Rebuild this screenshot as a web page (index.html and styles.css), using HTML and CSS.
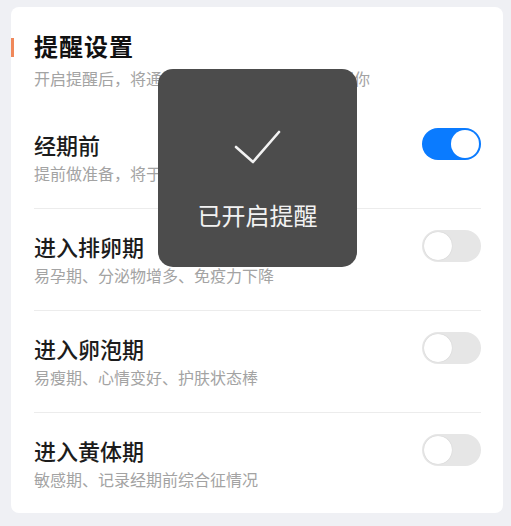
FILE: index.html
```html
<!DOCTYPE html>
<html lang="zh-CN">
<head>
    <meta charset="UTF-8">
    <meta name="viewport" content="width=device-width, initial-scale=1.0">
    <title>提醒设置</title>
    <link rel="stylesheet" href="styles.css">
</head>
<body>
    <div class="card">
        <div class="header">
            <h2 class="header-title">提醒设置</h2>
            <p class="header-desc">开启提醒后，将通过消息在各阶段开始前提醒你</p>
        </div>

        <div class="row">
            <div class="row-text">
                <div class="row-title">经期前</div>
                <div class="row-desc">提前做准备，将于经期前3天提醒你</div>
            </div>
            <div class="switch on"><span class="knob"></span></div>
        </div>

        <div class="row">
            <div class="row-text">
                <div class="row-title">进入排卵期</div>
                <div class="row-desc">易孕期、分泌物增多、免疫力下降</div>
            </div>
            <div class="switch"><span class="knob"></span></div>
        </div>

        <div class="row">
            <div class="row-text">
                <div class="row-title">进入卵泡期</div>
                <div class="row-desc">易瘦期、心情变好、护肤状态棒</div>
            </div>
            <div class="switch"><span class="knob"></span></div>
        </div>

        <div class="row">
            <div class="row-text">
                <div class="row-title">进入黄体期</div>
                <div class="row-desc">敏感期、记录经期前综合征情况</div>
            </div>
            <div class="switch"><span class="knob"></span></div>
        </div>
    </div>

    <div class="toast">
        <svg class="toast-icon" width="48" height="36" viewBox="0 0 48 36">
            <polyline points="3,18 20,33 46,3" fill="none" stroke="#f2f2f2" stroke-width="2.6" stroke-linecap="round" stroke-linejoin="round"/>
        </svg>
        <div class="toast-text">已开启提醒</div>
    </div>
</body>
</html>
```

FILE: styles.css
```css
body {
    margin: 0;
    padding: 7px 8px 0 11px;
    background-color: #eff0f4;
    font-family: "Noto Sans CJK SC", sans-serif;
    height: 526px;
    box-sizing: border-box;
    overflow: hidden;
}
.card {
    position: relative;
    background-color: #fff;
    border-radius: 8px;
    padding: 24px 22px 0 23px;
}
.header {
    margin-bottom: 18px;
}
.header-title {
    position: relative;
    margin: 0;
    font-size: 24px;
    line-height: 30px;
    font-weight: bold;
    color: #111;
    letter-spacing: 1px;
}
.header-title::before {
    content: "";
    position: absolute;
    left: -23px;
    top: 7px;
    width: 3px;
    height: 19px;
    background-color: #f0885a;
}
.header-desc {
    margin: 6px 0 0 0;
    font-size: 16px;
    line-height: 22px;
    color: #a3a3a3;
}
.row {
    display: flex;
    justify-content: space-between;
    align-items: flex-start;
    padding: 21px 0 24px 0;
    border-top: 1px solid #ececec;
}
.header + .row {
    border-top: none;
}
.row:last-child {
    padding-bottom: 23px;
}
.row-title {
    font-size: 22px;
    line-height: 32px;
    font-weight: 500;
    color: #1c1c1c;
}
.row-desc {
    margin-top: 2px;
    font-size: 16px;
    line-height: 22px;
    color: #a3a3a3;
}
.switch {
    position: relative;
    width: 59px;
    height: 32px;
    border-radius: 16px;
    background-color: #e6e6e6;
    flex-shrink: 0;
}
.switch .knob {
    position: absolute;
    top: 2px;
    left: 2px;
    width: 28px;
    height: 28px;
    border-radius: 50%;
    background-color: #fff;
    box-shadow: 0 0 1px rgba(0, 0, 0, 0.2);
}
.switch.on {
    background-color: #0a7bff;
}
.switch.on .knob {
    left: 29px;
    box-shadow: none;
}
.toast {
    position: absolute;
    left: 158px;
    top: 69px;
    width: 199px;
    height: 198px;
    border-radius: 15px;
    background-color: #4c4c4c;
    display: flex;
    flex-direction: column;
    align-items: center;
    padding-top: 60px;
    box-sizing: border-box;
}
.toast-icon {
    display: block;
    margin-left: -2px;
}
.toast-text {
    margin-top: 34px;
    font-size: 24px;
    line-height: 32px;
    color: #f2f2f2;
}
```
